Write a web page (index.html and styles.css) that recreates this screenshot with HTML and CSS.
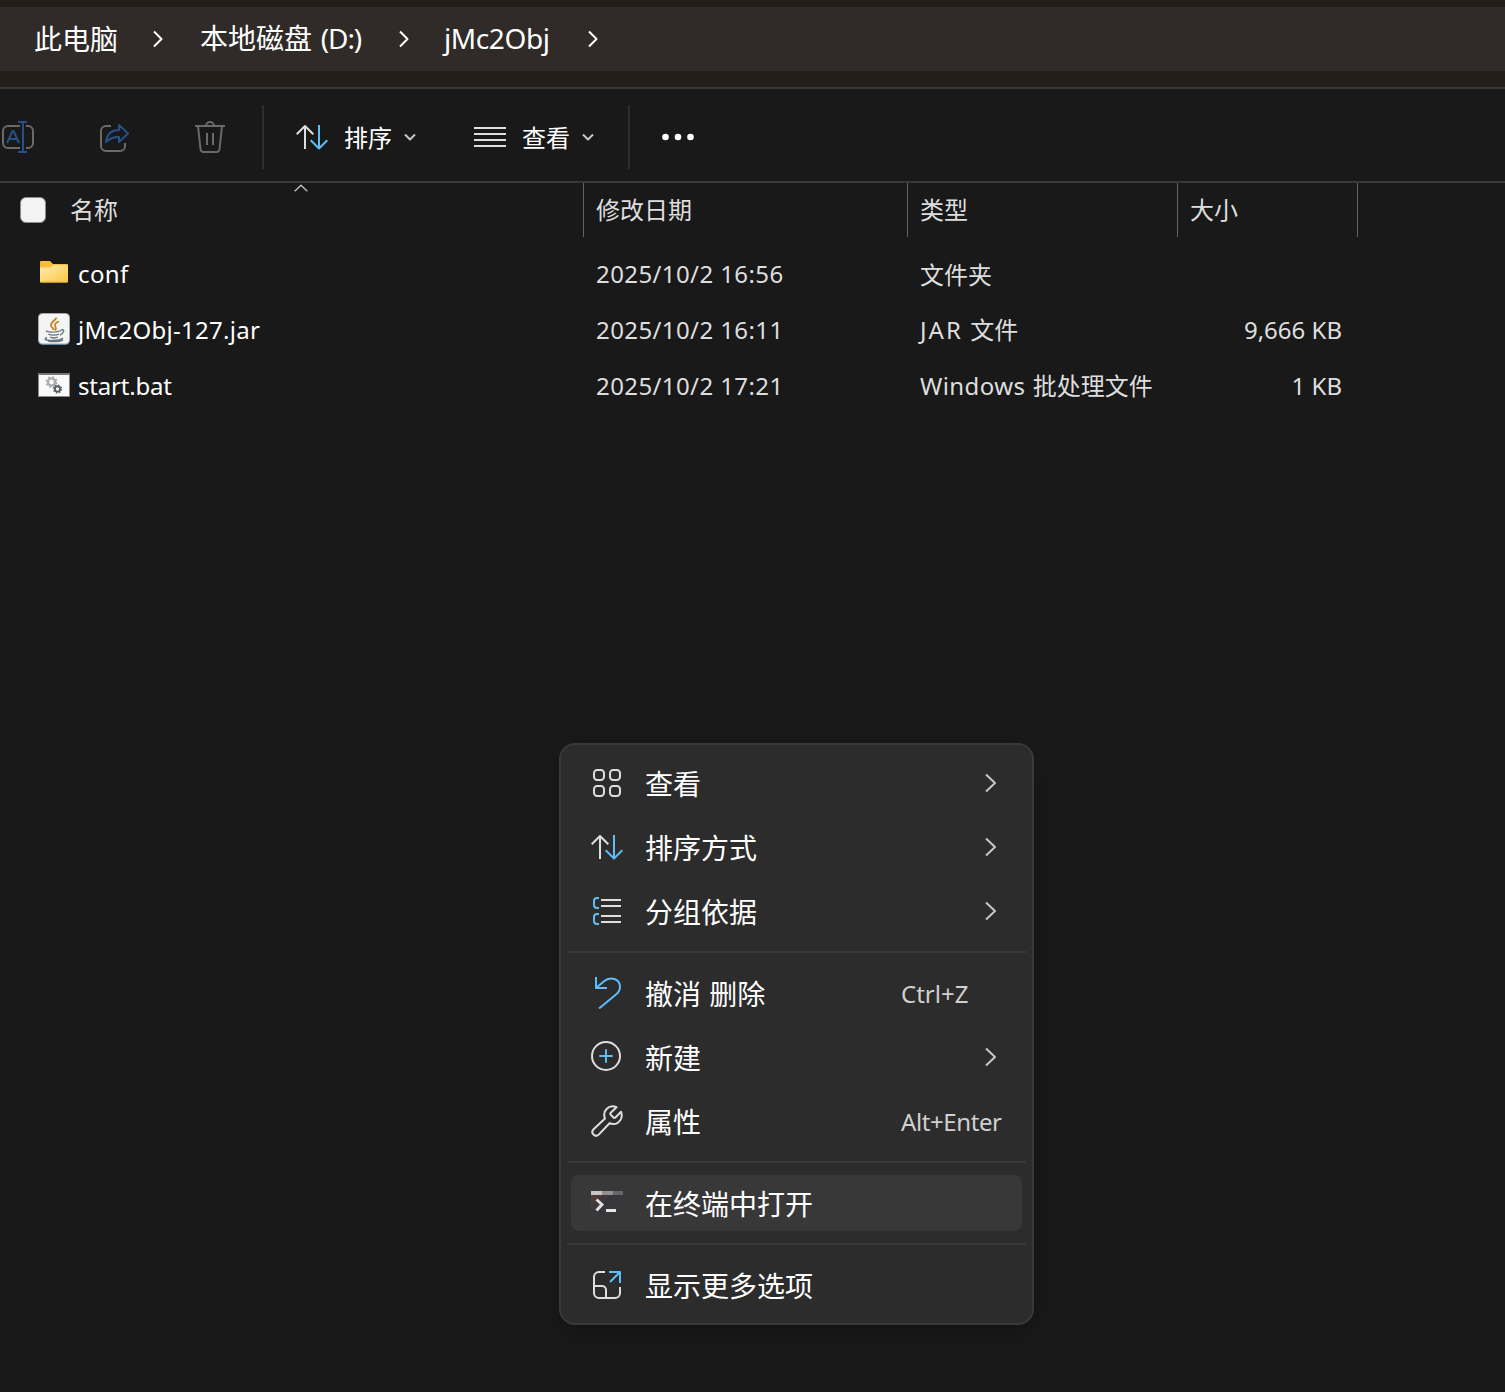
FILE: index.html
```html
<!DOCTYPE html>
<html lang="zh-CN">
<head>
<meta charset="utf-8">
<title>jMc2Obj</title>
<link rel="stylesheet" href="styles.css">
</head>
<body>
<svg class="defs" width="0" height="0" aria-hidden="true">
  <symbol id="sort" viewBox="0 0 32 32"><path class="light" d="M9 28V5M.7 13.300 9 5l8.300 8.300"/><path class="sky" d="M23 4v23.500M14.700 19.200 23 27.500l8.300-8.300"/></symbol>
  <symbol id="down" viewBox="0 0 12 8"><path class="soft" d="m1 1.500 5 5 5-5"/></symbol>
  <symbol id="crumb" viewBox="0 0 10 18"><path class="white" d="m1 1.500 7.500 7.500L1 16.500"/></symbol>
  <symbol id="next" viewBox="0 0 12 20"><path class="soft" d="m1 1.500 9 8.500-9 8.500"/></symbol>
</svg>

<div class="address">
  <nav class="crumbs">
    <span class="crumb c1">此电脑</span><svg class="sep"><use href="#crumb"/></svg>
    <span class="crumb c2">本地磁盘 <span class="lat">(D:)</span></span><svg class="sep"><use href="#crumb"/></svg>
    <span class="crumb c3"><span class="lat">jMc2Obj</span></span><svg class="sep"><use href="#crumb"/></svg>
  </nav>
</div>

<div class="toolbar">
  <svg class="tool rename" viewBox="0 0 34 32"><path class="dim" d="M20 5H8a5 5 0 0 0-5 5v12a5 5 0 0 0 5 5h12M26 5h2a5 5 0 0 1 5 5v12a5 5 0 0 1-5 5h-2"/><path class="navy" d="M23 1v30M18 1h9M18 31h9M7 22l5.500-12h1L19 22M9 18h8"/></svg>
  <svg class="tool share" viewBox="0 0 32 32"><path class="dim" d="M13 5H8a5 5 0 0 0-5 5v15a5 5 0 0 0 5 5h14a5 5 0 0 0 5-5v-3"/><path class="navy" d="M21 4l9 8.500-9 8.500v-5c-6 0-10 2-13 5 1-8 6-12 13-12z"/></svg>
  <svg class="tool trash" viewBox="0 0 32 32"><path class="dim" d="M1 5h30M12 5a4 4 0 0 1 8 0M4 5l2.500 23a3 3 0 0 0 3 3h13a3 3 0 0 0 3-3L28 5M13 12v12M19 12v12"/></svg>
  <span class="rule r1"></span>
  <svg class="tool sortbtn"><use href="#sort"/></svg><span class="label">排序</span><svg class="down"><use href="#down"/></svg>
  <svg class="tool viewbtn" viewBox="0 0 32 32"><path class="light" d="M0 7h32M0 13h32M0 19h32M0 25h32"/></svg><span class="label">查看</span><svg class="down"><use href="#down"/></svg>
  <span class="rule r2"></span>
  <svg class="tool dots" viewBox="0 0 34 32"><g fill="#fff"><circle cx="4.500" cy="16" r="3.300"/><circle cx="17" cy="16" r="3.300"/><circle cx="29.500" cy="16" r="3.300"/></g></svg>
</div>

<div class="head cols">
  <div class="cell first"><span class="check"></span>名称<svg class="asc" viewBox="0 0 14 8"><path class="soft thin" d="m.7 7.300 6.300-6 6.300 6"/></svg></div>
  <div class="cell">修改日期</div>
  <div class="cell">类型</div>
  <div class="cell">大小</div>
</div>

<div class="files">
  <div class="file cols">
    <div class="name"><svg class="ficon" viewBox="0 0 32 32"><defs><linearGradient id="fold" x1="0" y1="0" x2="1" y2="1"><stop offset=".2" stop-color="#ffe69a"/><stop offset="1" stop-color="#fbc441"/></linearGradient></defs><path d="M2 5a1 1 0 0 1 1-1h9l3 3h14a1 1 0 0 1 1 1v10H2z" fill="#f9bd3b"/><path d="M2 10.500h10.500L15.500 8H30v16.500a1 1 0 0 1-1 1H3a1 1 0 0 1-1-1z" fill="url(#fold)"/><path d="M2.500 25h27" stroke="#efb22f"/></svg><span class="lat n1">conf</span></div>
    <div class="lat date">2025/10/2 16:56</div><div class="kind">文件夹</div><div></div>
  </div>
  <div class="file cols">
    <div class="name"><svg class="ficon" viewBox="0 0 32 32"><rect x=".5" y="1" width="31" height="31" rx="4" fill="#2e6396"/><rect x=".5" y=".5" width="31" height="30.500" rx="4" fill="#f3f4f4" stroke="#a5a7a8"/><g fill="none"><path d="M18.500 4.500c-1 3-6 4.500-5.500 8 .2 1.800 2.500 2.500 2.700 4.500M21 8.500c-3 1-5.500 3-3.500 5.500 1 1.500.3 2.500-.5 3.300" stroke="#c77e26" stroke-width="1.800"/><path d="M9 17.500c-3 2 10 2.200 14 0M10.500 21c2 1.600 8 1.500 10.500 0M12 24c2 1.300 6 1.200 8 0M23 17c5-1.500 2 4-1 5M9 24.500c-8 3.500 12 4 16 .5M10 28c6 1 12 .5 15-1" stroke="#687780" stroke-width="1.400"/></g></svg><span class="lat n2">jMc2Obj-127.jar</span></div>
    <div class="lat date">2025/10/2 16:11</div><div class="kind"><span class="lat jar">JAR</span> 文件</div><div class="lat size">9,666 KB</div>
  </div>
  <div class="file cols">
    <div class="name"><svg class="ficon" viewBox="0 0 32 32"><rect x=".5" y="4.500" width="31" height="23" fill="#fafafa" stroke="#888"/><path d="M0 5h32" stroke="#777" stroke-width="2"/><g fill="none"><circle cx="13.500" cy="13" r="3.500" stroke="#a7abad" stroke-width="2.200"/><circle cx="13.500" cy="13" r="5" stroke="#a7abad" stroke-width="1.800" stroke-dasharray="2 1.930"/><circle cx="19.500" cy="20" r="2.600" stroke="#555b5e" stroke-width="1.800"/><circle cx="19.500" cy="20" r="3.900" stroke="#555b5e" stroke-width="1.400" stroke-dasharray="1.600 1.460"/></g></svg><span class="lat n3">start.bat</span></div>
    <div class="lat date">2025/10/2 17:21</div><div class="kind"><span class="lat win">Windows</span> 批处理文件</div><div class="lat size">1 KB</div>
  </div>
</div>

<div class="menu">
  <div class="item"><svg class="micon" viewBox="0 0 32 32"><g class="light"><rect x="3" y="3" width="10" height="10" rx="3.200"/><rect x="19" y="3" width="10" height="10" rx="3.200"/><rect x="3" y="19" width="10" height="10" rx="3.200"/><rect x="19" y="19" width="10" height="10" rx="3.200"/></g></svg><span>查看</span><svg class="next"><use href="#next"/></svg></div>
  <div class="item"><svg class="micon"><use href="#sort"/></svg><span>排序方式</span><svg class="next"><use href="#next"/></svg></div>
  <div class="item"><svg class="micon" viewBox="0 0 32 32"><path class="sky" d="M8 3H6a3 3 0 0 0-3 3v4a3 3 0 0 0 3 3h2M8 19H6a3 3 0 0 0-3 3v4a3 3 0 0 0 3 3h2"/><path class="light" d="M10 5h20M10 11h20M10 21h20M10 27h20"/></svg><span>分组依据</span><svg class="next"><use href="#next"/></svg></div>
  <hr>
  <div class="item"><svg class="micon" viewBox="0 0 32 32"><path class="sky" d="M5 0v11h11M5 11l8-6.800C19-1 29 1.500 29 10c0 3.500-1.500 5.500-4 7.500L8 31.500"/></svg><span class="undo">撤消 删除</span><span class="lat key k1">Ctrl+Z</span></div>
  <div class="item"><svg class="micon" viewBox="0 0 32 32"><circle class="light" cx="15" cy="15" r="14"/><path class="sky" d="M15 8.300v13.400M8.300 15h13.400"/></svg><span>新建</span><svg class="next"><use href="#next"/></svg></div>
  <div class="item"><svg class="micon" viewBox="0 0 32 32"><path class="light" d="M25.500 2.200 20 7.500c-1 1-1 1.600 0 2.500l2.200 2.200c.9.900 1.600.9 2.500 0L30 6.700C32.500 13 28 19 22.500 19c-1.500 0-2.800-.3-4-.8L8 29.400c-3.800 3.700-9-1.500-5.400-5.200L14 13.500C11 5.500 18-.8 25.500 2.200z"/></svg><span>属性</span><span class="lat key k2">Alt+Enter</span></div>
  <hr>
  <div class="item hover"><svg class="micon" viewBox="0 0 32 32"><defs><linearGradient id="term" x1="0" y1="0" x2="1" y2=".6"><stop offset="0" stop-color="#5a3d35"/><stop offset=".5" stop-color="#36353c"/><stop offset="1" stop-color="#393838"/></linearGradient></defs><path d="M0 8h32l-5 14q-1 3-4 4H3q-3 0-3-3z" fill="url(#term)"/><path d="M0 4h11v4H0z" fill="#c5c5c5"/><path d="M11 4h11v4H11z" fill="#919191"/><path d="M22 4h10v4H22z" fill="#666"/><path d="m5.500 12.500 5.500 5-5.500 6" fill="none" stroke="#ddd" stroke-width="3"/><path d="M15 22h10v3H15z" fill="#e5e5e5"/></svg><span>在终端中打开</span></div>
  <hr>
  <div class="item"><svg class="micon" viewBox="0 0 32 32"><path class="light" d="M14 3H8a5 5 0 0 0-5 5v16a5 5 0 0 0 5 5h16a5 5 0 0 0 5-5v-6M3 17h8a4 4 0 0 1 4 4v8"/><path class="sky" d="M18 3h11v11M19 13 29 3"/></svg><span>显示更多选项</span></div>
</div>
</body>
</html>
```
FILE: styles.css
```css
* { box-sizing: border-box; }
body {
  margin: 0;
  height: 1392px;
  position: relative;
  overflow: hidden;
  background: #191919;
  color: #fff;
  font: 24px/32px "Noto Sans CJK SC", "Noto Sans", sans-serif;
  white-space: nowrap;
}
svg { display: block; flex: none; }
.defs { position: absolute; }
.lat { font-family: "Noto Sans", sans-serif; }
.light, .sky, .dim, .navy, .soft, .white { fill: none; stroke-width: 2; stroke-linejoin: round; }
.light { stroke: #dedede; }
.sky { stroke: #60bdf5; }
.dim { stroke: #6b6a69; }
.navy { stroke: #274f88; }
.soft { stroke: #c8c8c8; }
.white { stroke: #fff; }
.thin { stroke-width: 1.3; }

.address { height: 89px; padding: 7px 0 16px; background: #241e1a; border-bottom: 2px solid #393939; }
.crumbs { display: flex; align-items: center; height: 64px; padding-left: 34px; background: #302b28; font-size: 28px; }
.crumb { line-height: 40px; padding-bottom: 3px; }
.c1 { width: 119px; }
.c2 { width: 199px; margin-left: 37px; word-spacing: 2.5px; }
.c3 { width: 144px; margin-left: 35px; }
.c2 .lat { letter-spacing: -1.1px; }
.c3 .lat { letter-spacing: -.4px; }
.sep { width: 10px; height: 18px; }

.toolbar { display: flex; align-items: center; height: 94px; padding-top: 4px; border-bottom: 2px solid #393939; }
.tool { width: 32px; height: 32px; }
.rename { width: 34px; }
.share { margin-left: 64px; }
.trash { margin-left: 64px; }
.rule { width: 2px; height: 64px; background: #2d2d2d; }
.r1 { margin-left: 36px; }
.sortbtn { margin-left: 32px; }
.label { margin-left: 16px; width: 48px; }
.down { width: 12px; height: 8px; margin-left: 12px; }
.viewbtn { margin-left: 58px; }
.r2 { margin-left: 34px; }
.dots { width: 34px; margin-left: 31px; }

.cols { display: grid; grid-template-columns: 584px 324px 270px 180px; }
.head { height: 54px; color: #dedede; }
.cell { display: flex; align-items: center; padding: 0 0 2px 12px; border-right: 1px solid #636363; }
.first { position: relative; padding-left: 20px; }
.check { width: 26px; height: 26px; margin: 2px 24px 0 0; border-radius: 6px; background: #f3f3f3; border: 1px solid #8c8c8c; }
.asc { position: absolute; left: 294px; top: 1px; width: 14px; height: 8px; }

.files { padding-top: 9px; color: #dedede; }
.file { height: 56px; align-items: center; }
.file > div { padding-left: 12px; }
.file > .name { display: flex; align-items: center; padding-left: 38px; color: #fff; }
.file > .date { letter-spacing: .4px; }
.file > .kind { padding-bottom: 1px; word-spacing: 2px; }
.file > .size { padding: 0 16px 0 0; text-align: right; }
.ficon { width: 32px; height: 32px; margin: -2px 8px 0 0; }
.n1 { letter-spacing: .4px; }
.n2 { letter-spacing: .3px; }
.n3 { letter-spacing: -.2px; }
.jar { letter-spacing: 2px; }
.win { letter-spacing: .4px; }

.menu {
  position: absolute;
  left: 559px;
  top: 743px;
  width: 475px;
  height: 582px;
  padding: 6px 0;
  background: #2c2c2c;
  border: 2px solid #393939;
  border-radius: 16px;
  box-shadow: 0 8px 24px rgba(0, 0, 0, .2);
  font-size: 28px;
}
.item { display: grid; grid-template-columns: 54px 256px 1fr; align-items: center; height: 56px; margin: 4px 10px; padding: 0 25px 0 20px; border-radius: 8px; line-height: 40px; }
.item + .item { margin-top: 8px; }
.hover { background: #383838; }
.micon { width: 32px; height: 32px; }
.next { width: 12px; height: 20px; justify-self: end; }
.undo { word-spacing: 2px; }
.key { padding-top: 1px; font-size: 24px; color: #d0d0d0; }
.k2 { letter-spacing: -.4px; }
.menu hr { height: 2px; margin: 12px 6px; border: 0; background: #393939; }
```
